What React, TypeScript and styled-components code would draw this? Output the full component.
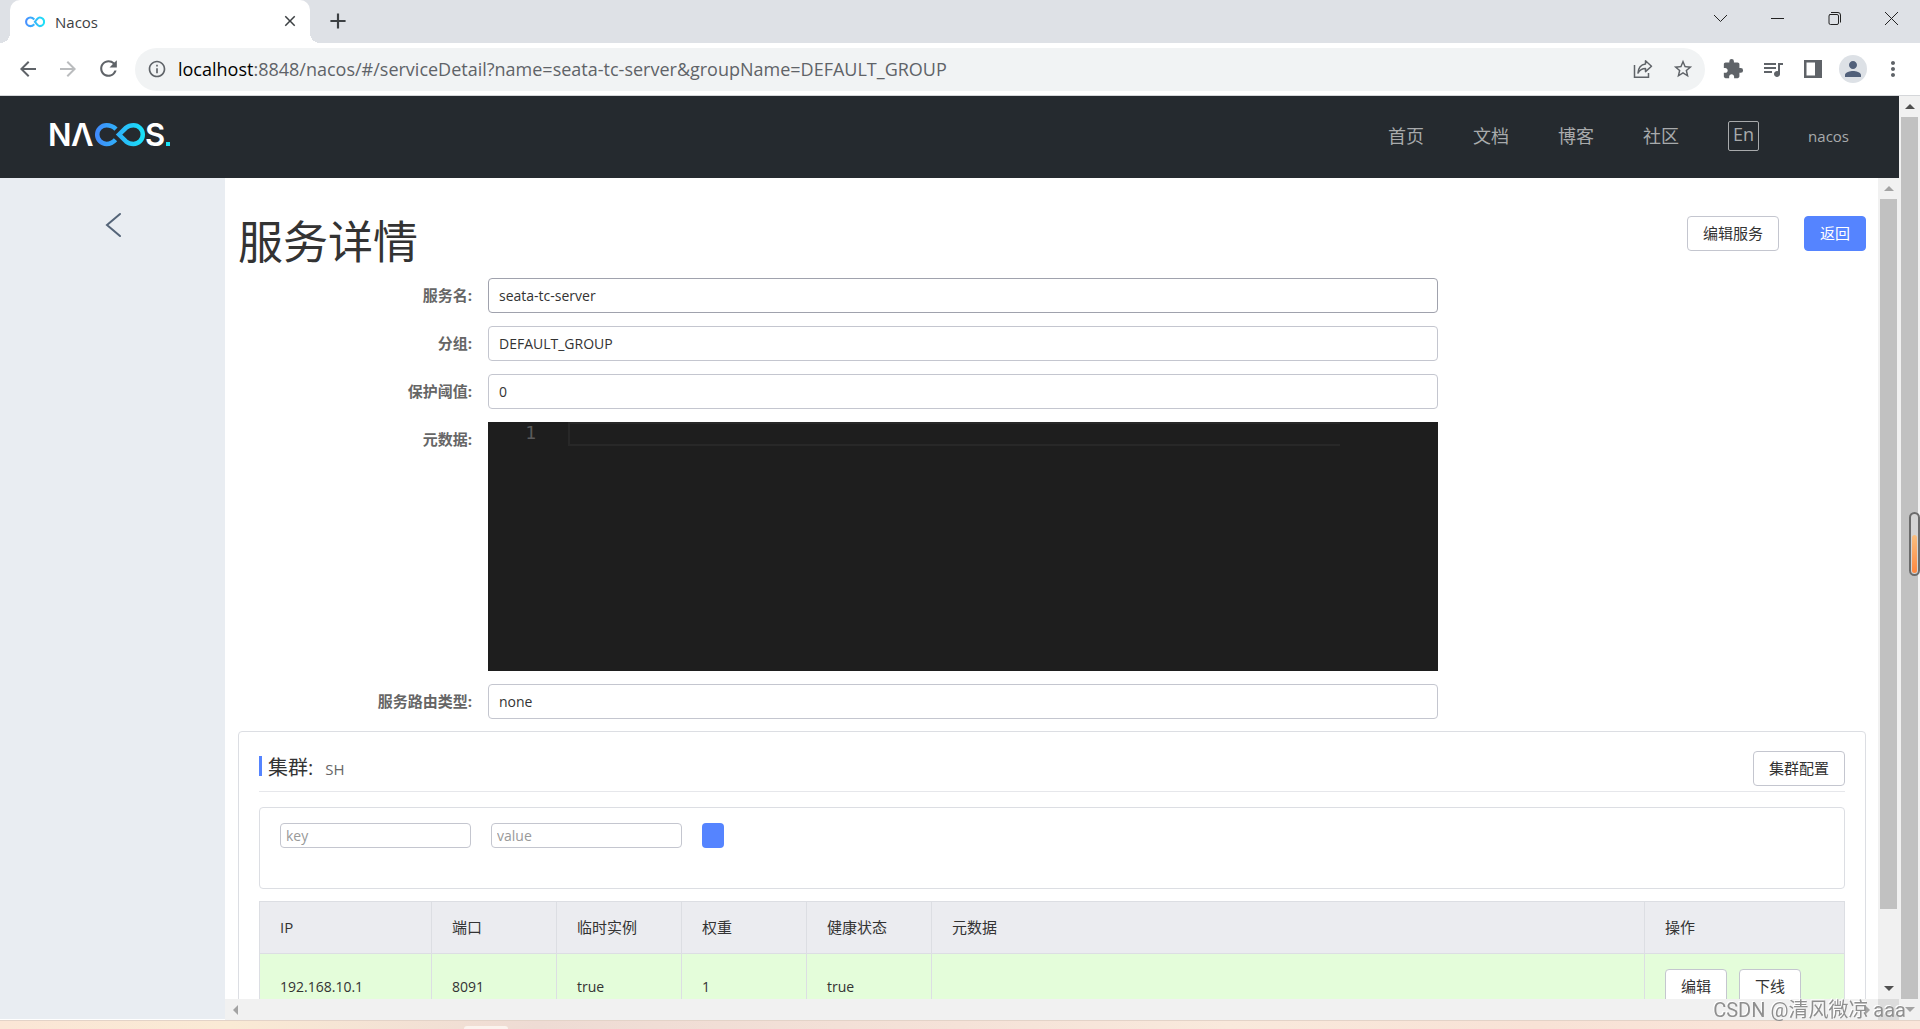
import React from "react";
import styled, { createGlobalStyle, css } from "styled-components";
import {
  MdAdd,
  MdArrowBack,
  MdArrowForward,
  MdClose,
  MdExtension,
  MdInfoOutline,
  MdMoreVert,
  MdPerson,
  MdQueueMusic,
  MdRefresh,
  MdStarBorder,
} from "react-icons/md";

const GlobalStyle = createGlobalStyle`
  *, *::before, *::after { box-sizing: border-box; }
  body {
    margin: 0;
    overflow: hidden;
    color: #333;
    font-family: "Open Sans", "Noto Sans CJK SC", sans-serif;
    font-size: 15px;
    line-height: 20px;
  }
  button, input, textarea { font-family: inherit; margin: 0; }
`;

/* ---------- Browser window ---------- */

const BrowserWindow = styled.div`
  display: flex;
  flex-direction: column;
  height: 100vh;
  background: #fff;
`;

const TitleBar = styled.div`
  display: flex;
  flex: none;
  height: 43px;
  padding-left: 10px;
  background: #dee1e6;
`;

const Tab = styled.div`
  position: relative;
  display: flex;
  align-items: center;
  gap: 10px;
  width: 300px;
  padding: 0 11px 0 15px;
  border-radius: 10px 10px 0 0;
  background: #fff;

  &::before,
  &::after {
    content: "";
    position: absolute;
    bottom: 0;
    width: 10px;
    height: 10px;
  }
  &::before {
    right: 100%;
    background: radial-gradient(circle at 0 0, transparent 10px, #fff 10px);
  }
  &::after {
    left: 100%;
    background: radial-gradient(circle at 100% 0, transparent 10px, #fff 10px);
  }
`;

const TabTitle = styled.span`
  flex: 1;
  color: #3c4043;
`;

const IconButton = styled.button<{ $width: number; $color?: string }>`
  display: flex;
  align-items: center;
  justify-content: center;
  flex: none;
  width: ${(p) => p.$width}px;
  padding: 0 0 2px;
  border: 0;
  background: none;
  color: ${(p) => p.$color ?? "#5f6368"};
`;

const WindowControls = styled.div`
  display: flex;
  height: 38px;
  margin-left: auto;
`;

const Toolbar = styled.div`
  display: flex;
  flex: none;
  align-items: stretch;
  height: 53px;
  padding: 5px 7px 4px 8px;
  border-bottom: 1px solid #d5d7da;
`;

const Omnibox = styled.div`
  display: flex;
  flex: 1;
  align-items: stretch;
  margin: 0 8px 0 7px;
  padding: 0 2px 0 12px;
  border-radius: 22px;
  background: #f1f3f4;
`;

const SiteInfo = styled(IconButton)`
  margin-right: 11px;
`;

const Address = styled.div`
  flex: 1;
  align-self: center;
  padding-bottom: 2px;
  color: #5f6368;
  font-size: 18px;
  line-height: 24px;
`;

const Host = styled.span`
  color: #000;
`;

const Avatar = styled.span`
  display: flex;
  align-items: center;
  justify-content: center;
  width: 28px;
  height: 28px;
  border-radius: 50%;
  background: #dde1e6;
  color: #51607a;
`;

const Viewport = styled.div`
  display: flex;
  flex: 1;
  min-height: 0;
`;

const Page = styled.div`
  display: flex;
  flex: 1;
  flex-direction: column;
  min-width: 0;
`;

const DesktopEdge = styled.div`
  display: flex;
  flex: none;
  align-items: flex-end;
  height: 9px;
  padding-left: 464px;
  border-top: 1px solid #e3d3c8;
  background: linear-gradient(90deg, #fbe6d6, #faead5 12%, #eedbd4 28%, #f5e2d8 50%, #f9e9dc 64%, #f8e2d6 80%, #fae6da);

  &::after {
    content: "";
    width: 44px;
    height: 3px;
    border-radius: 4px 4px 0 0;
    background: #fbf3ee;
  }
`;

/* ---------- Scroll bars ---------- */

const VerticalTrack = styled.div`
  display: flex;
  flex: none;
  flex-direction: column;
  align-items: center;
  width: 21px;
  background: #f1f1f1;
`;

const Arrow = styled.span<{ $dir: "up" | "down" | "left" | "right"; $color: string }>`
  display: flex;
  align-items: center;
  justify-content: center;
  flex: none;
  width: 21px;
  height: 21px;

  &::before {
    content: "";
    border: 5px solid transparent;
    ${(p) => p.$dir === "up" && css`border-top-width: 0; border-bottom-color: ${p.$color};`}
    ${(p) => p.$dir === "down" && css`border-bottom-width: 0; border-top-color: ${p.$color};`}
    ${(p) => p.$dir === "left" && css`border-left-width: 0; border-right-color: ${p.$color};`}
    ${(p) => p.$dir === "right" && css`border-right-width: 0; border-left-color: ${p.$color};`}
  }
`;

const Thumb = styled.div<{ $share: number }>`
  flex: ${(p) => p.$share} 1 0;
  width: 17px;
  background: #c1c1c1;
`;

const TrackRest = styled.div<{ $share: number }>`
  flex: ${(p) => p.$share} 1 0;
`;

const HorizontalTrack = styled.div`
  display: flex;
  flex: none;
  justify-content: space-between;
  height: 21px;
  background: #f1f1f1;
`;

const TrackEnd = styled.div`
  display: flex;
`;

const Corner = styled.span`
  width: 21px;
  background: #dcdcdc;
`;

/* ---------- Nacos header and side ---------- */

const Header = styled.header`
  display: flex;
  flex: none;
  align-items: center;
  justify-content: space-between;
  height: 82px;
  padding: 0 50px 2px 47px;
  background: #252a2f;
`;

const LogoLink = styled.a`
  display: flex;
  margin-bottom: 2px;
`;

const LogoLetter = styled.text`
  fill: #fff;
  font-family: Inter, sans-serif;
  font-size: 31px;
  font-weight: 600;
`;

const Nav = styled.nav`
  display: flex;
  align-items: center;
  gap: 49px;
`;

const NavLink = styled.a<{ $small?: boolean }>`
  color: #a8aaac;
  font-size: ${(p) => (p.$small ? 15 : 18)}px;
  line-height: 24px;
  text-decoration: none;
`;

const LangButton = styled.button`
  width: 31px;
  height: 30px;
  padding: 0 0 4px;
  border: 1px solid #a8aaac;
  border-radius: 2px;
  background: none;
  color: #a8aaac;
  font-size: 18px;
  line-height: 24px;
`;

const Body = styled.div`
  display: flex;
  flex: 1;
  min-height: 0;
`;

const Sidebar = styled.aside`
  display: flex;
  flex: none;
  align-items: flex-start;
  justify-content: center;
  width: 225px;
  padding-top: 34px;
  border-bottom: 1px solid #fff;
  background: #e9edf2;
`;

const Main = styled.div`
  display: flex;
  flex: 1;
  flex-direction: column;
  min-width: 0;
`;

const ScrollArea = styled.div`
  display: flex;
  flex: 1;
  min-height: 0;
`;

const Content = styled.main`
  flex: 1;
  min-width: 0;
  overflow: hidden;
  padding: 38px 12px 0 13px;
`;

const TitleRow = styled.div`
  display: flex;
  align-items: flex-start;
  justify-content: space-between;
  margin-bottom: 10px;
`;

const Title = styled.h1`
  margin: 0;
  font-size: 45px;
  font-weight: 400;
  line-height: 52px;
`;

const ButtonGroup = styled.div<{ $gap: number }>`
  display: flex;
  gap: ${(p) => p.$gap}px;
`;

const Button = styled.button<{ $primary?: boolean }>`
  height: 35px;
  padding: 0 15px 2px;
  border: 1px solid ${(p) => (p.$primary ? "#5584ff" : "#c4c6cf")};
  border-radius: 4px;
  background: ${(p) => (p.$primary ? "#5584ff" : "#fff")};
  color: ${(p) => (p.$primary ? "#fff" : "#333")};
  font-size: 15px;
  line-height: 20px;
  white-space: nowrap;
`;

/* ---------- Service form ---------- */

const Form = styled.form`
  display: grid;
  grid-template-columns: 250px minmax(0, 950px);
  row-gap: 13px;
  margin-bottom: 12px;
`;

const Label = styled.label`
  padding-right: 16px;
  color: #666;
  font-weight: 700;
  line-height: 34px;
  text-align: right;
`;

const Input = styled.input<{ $active?: boolean }>`
  width: 100%;
  height: 35px;
  padding: 0 10px 1px;
  border: 1px solid ${(p) => (p.$active ? "#a0a2ad" : "#c4c6cf")};
  border-radius: 4px;
  outline: 0;
  background: #fff;
  color: #333;
  font-size: 14px;
`;

const Editor = styled.div`
  display: flex;
  align-items: flex-start;
  height: 249px;
  padding-right: 98px;
  background: #1e1e1e;
`;

const LineNumber = styled.span`
  width: 80px;
  padding-right: 32px;
  color: #5a5a5a;
  font-family: "DejaVu Sans Mono", monospace;
  font-size: 18px;
  line-height: 22px;
  text-align: right;
`;

const EditorLine = styled.textarea`
  flex: 1;
  height: 24px;
  padding: 0;
  border: 2px solid #282828;
  border-right: 0;
  outline: 0;
  resize: none;
  overflow: hidden;
  background: none;
  color: #d4d4d4;
`;

/* ---------- Cluster card ---------- */

const Card = styled.section`
  padding: 19px 20px 20px;
  border: 1px solid #dcdee3;
  border-radius: 4px;
`;

const CardHeader = styled.div`
  display: flex;
  align-items: flex-start;
  justify-content: space-between;
  margin-bottom: 15px;
  padding-bottom: 5px;
  border-bottom: 1px solid #e6e7eb;
`;

const CardTitle = styled.h2`
  display: flex;
  align-items: baseline;
  gap: 12px;
  height: 20px;
  margin: 5px 0 0;
  padding-left: 6px;
  border-left: 3px solid #5584ff;
  font-size: 20px;
  font-weight: 400;
  line-height: 24px;
`;

const ClusterName = styled.span`
  color: #666;
  font-size: 15px;
`;

const FilterBox = styled.div`
  display: flex;
  align-items: flex-start;
  gap: 20px;
  min-height: 82px;
  margin-bottom: 12px;
  padding: 15px 20px;
  border: 1px solid #dcdee3;
  border-radius: 4px;
`;

const FilterInput = styled.input`
  width: 191px;
  height: 25px;
  padding: 0 5px;
  border: 1px solid #c4c6cf;
  border-radius: 4px;
  outline: 0;
  color: #333;
  font-size: 14px;

  &::placeholder {
    color: #999;
  }
`;

const FilterSubmit = styled.button`
  width: 22px;
  height: 25px;
  padding: 0;
  border: 0;
  border-radius: 4px;
  background: #5584ff;
`;

const Table = styled.table`
  width: 100%;
  table-layout: fixed;
  border: solid #dcdee3;
  border-width: 1px 0 0 1px;
  border-collapse: separate;
  border-spacing: 0;
`;

const Th = styled.th<{ $width?: number }>`
  width: ${(p) => (p.$width ? `${p.$width}px` : "auto")};
  height: 52px;
  padding: 0 20px 2px;
  border: solid #dcdee3;
  border-width: 0 1px 1px 0;
  background: #ebecf0;
  font-weight: 400;
  text-align: left;
`;

const Td = styled.td`
  padding: 15px 20px 17px;
  border: solid #dcdee3;
  border-width: 0 1px 1px 0;
  background: #e4fdda;
  font-size: 14px;
`;

/* ---------- Overlays ---------- */

const Watermark = styled.div`
  position: fixed;
  right: 14px;
  bottom: 6px;
  color: #8f8f8f;
  font-family: "Roboto", "Noto Sans CJK SC", sans-serif;
  font-size: 20px;
  line-height: 26px;
  text-shadow: -1px -1px 0 #fff;
  white-space: nowrap;
`;

const Gauge = styled.div`
  position: fixed;
  top: 512px;
  right: 0;
  width: 11px;
  height: 64px;
  padding: 21px 1px 1px;
  border: 2px solid #6b6b6b;
  border-radius: 6px;
  background: #d4d4d4;
`;

const GaugeFill = styled.div`
  height: 100%;
  border-radius: 3px;
  background: linear-gradient(#f9bf80, #ff8740);
`;

/* ---------- Drawings ---------- */

const Favicon = () => (
  <svg width="20" height="12" viewBox="0 0 20 12" fill="none" strokeWidth="2.100" aria-hidden="true">
    <defs>
      <linearGradient id="fav" gradientUnits="userSpaceOnUse" x1="0" y1="0" x2="20" y2="0">
        <stop offset="0" stopColor="#4a8cff" />
        <stop offset="1" stopColor="#1de4f6" />
      </linearGradient>
    </defs>
    <path d="M9.300 3.500C8 2 6.800 1.500 5.400 1.500A4.300 4.300 0 0 0 5.400 10.100C7 10.100 8 9.600 9.300 8.200" stroke="url(#fav)" />
    <path d="M9.900 5.800L12 3.200C13 2.100 13.700 1.500 14.800 1.500A4.300 4.300 0 0 1 14.800 10.100C13.700 10.100 13 9.600 12 8.400Z" stroke="url(#fav)" />
  </svg>
);

const Logo = () => (
  <svg width="126" height="40" viewBox="-2 -8 126 40" role="img" aria-label="NACOS.">
    <defs>
      <linearGradient id="brand" gradientUnits="userSpaceOnUse" x1="46" y1="0" x2="96" y2="0">
        <stop offset="0" stopColor="#4288fb" />
        <stop offset="1" stopColor="#17e3f8" />
      </linearGradient>
    </defs>
    <LogoLetter x="-1" y="23">N</LogoLetter>
    <LogoLetter x="22" y="23">Λ</LogoLetter>
    <g fill="none" stroke="url(#brand)" strokeWidth="4.500">
      <path d="M67 6.200C64 3.200 61 2.300 57.500 2.300A9.300 9.300 0 0 0 57.500 20.900C61.500 20.900 64 19.500 66.500 16.700" />
      <path d="M70 11.600L77 4.800C79.300 2.900 81.500 2.300 84.500 2.300A9.300 9.300 0 0 1 84.500 20.900C81.500 20.900 79.300 20.300 77 18.400Z" />
    </g>
    <LogoLetter x="96" y="23">S</LogoLetter>
    <rect x="117" y="19" width="4" height="4" fill="#17e3f8" />
  </svg>
);

const ShareIcon = () => (
  <svg width="20" height="20" viewBox="0 0 20 20" fill="none" stroke="currentColor" strokeWidth="1.500" aria-hidden="true">
    <path d="M1.500 6V18.200H15.500V14" />
    <path d="M12.500 1.800L18.500 7.200L12.500 12.600V9.600C9.200 9.600 6.800 11 5 14C5.300 9 8 5.500 12.500 4.900Z" strokeLinejoin="round" />
  </svg>
);

const SidePanelIcon = () => (
  <svg width="20" height="20" viewBox="0 0 20 20" fill="currentColor" aria-hidden="true">
    <path fillRule="evenodd" d="M1 1H19V19H1ZM3.500 3.500V16.500H12V3.500Z" />
  </svg>
);

type WindowGlyph = "search" | "min" | "max" | "close";

const windowPaths: Record<WindowGlyph, string> = {
  search: "M1 4L7.500 10.500L14 4",
  min: "M1 7.500H14",
  max: "M2.500 3.500H10Q11.500 3.500 11.500 5V12Q11.500 13.500 10 13.500H3.500Q2 13.500 2 12V5Q2 3.500 3.500 3.500M4 1.500H11Q13.500 1.500 13.500 4V11.500",
  close: "M1 1L14 14M14 1L1 14",
};

const WindowIcon = ({ name }: { name: WindowGlyph }) => (
  <svg width="15" height="15" viewBox="0 0 15 15" fill="none" stroke="currentColor" strokeWidth="1" aria-hidden="true">
    <path d={windowPaths[name]} />
  </svg>
);

const CollapseIcon = () => (
  <svg width="18" height="26" viewBox="0 0 18 26" fill="none" stroke="#546478" strokeWidth="2" aria-hidden="true">
    <path d="M16 2L3 13L16 24" strokeLinecap="round" />
  </svg>
);

/* ---------- Data ---------- */

const links = ["首页", "文档", "博客", "社区"];

const columns: { title: string; width?: number }[] = [
  { title: "IP", width: 172 },
  { title: "端口", width: 125 },
  { title: "临时实例", width: 125 },
  { title: "权重", width: 125 },
  { title: "健康状态", width: 125 },
  { title: "元数据" },
  { title: "操作", width: 200 },
];

const instances = [{ ip: "192.168.10.1", port: 8091, ephemeral: true, weight: 1, healthy: true }];

const Field = ({ id, label, value, active }: { id: string; label: string; value: string; active?: boolean }) => (
  <>
    <Label htmlFor={id}>{label}:</Label>
    <Input id={id} defaultValue={value} readOnly $active={active} />
  </>
);

export default function App() {
  return (
    <BrowserWindow>
      <GlobalStyle />
      <TitleBar>
        <Tab>
          <Favicon />
          <TabTitle>Nacos</TabTitle>
          <IconButton $width={18} $color="#3c4043" aria-label="关闭标签页">
            <MdClose size={18} />
          </IconButton>
        </Tab>
        <IconButton $width={55} $color="#3c4043" aria-label="新标签页">
          <MdAdd size={26} />
        </IconButton>
        <WindowControls>
          {(["search", "min", "max", "close"] as WindowGlyph[]).map((name) => (
            <IconButton key={name} $width={57} $color="#222" aria-label={name}>
              <WindowIcon name={name} />
            </IconButton>
          ))}
        </WindowControls>
      </TitleBar>

      <Toolbar>
        <IconButton $width={40} aria-label="后退"><MdArrowBack size={24} /></IconButton>
        <IconButton $width={40} $color="#babcbe" aria-label="前进"><MdArrowForward size={24} /></IconButton>
        <IconButton $width={40} aria-label="刷新"><MdRefresh size={25} /></IconButton>
        <Omnibox>
          <SiteInfo $width={20} aria-label="网站信息"><MdInfoOutline size={20} /></SiteInfo>
          <Address>
            <Host>localhost</Host>:8848/nacos/#/serviceDetail?name=seata-tc-server&amp;groupName=DEFAULT_GROUP
          </Address>
          <IconButton $width={40} aria-label="分享"><ShareIcon /></IconButton>
          <IconButton $width={40} aria-label="收藏"><MdStarBorder size={22} /></IconButton>
        </Omnibox>
        <IconButton $width={40} aria-label="扩展程序"><MdExtension size={22} /></IconButton>
        <IconButton $width={40} aria-label="媒体"><MdQueueMusic size={24} /></IconButton>
        <IconButton $width={40} aria-label="侧边栏"><SidePanelIcon /></IconButton>
        <IconButton $width={40} aria-label="用户"><Avatar><MdPerson size={24} /></Avatar></IconButton>
        <IconButton $width={40} aria-label="菜单"><MdMoreVert size={24} /></IconButton>
      </Toolbar>

      <Viewport>
        <Page>
          <Header>
            <LogoLink href="#/"><Logo /></LogoLink>
            <Nav>
              {links.map((text) => (
                <NavLink key={text} href="#/">{text}</NavLink>
              ))}
              <LangButton>En</LangButton>
              <NavLink href="#/" $small>nacos</NavLink>
            </Nav>
          </Header>

          <Body>
            <Sidebar>
              <IconButton $width={30} aria-label="返回上一级"><CollapseIcon /></IconButton>
            </Sidebar>
            <Main>
              <ScrollArea>
                <Content>
                  <TitleRow>
                    <Title>服务详情</Title>
                    <ButtonGroup $gap={25}>
                      <Button>编辑服务</Button>
                      <Button $primary>返回</Button>
                    </ButtonGroup>
                  </TitleRow>

                  <Form>
                    <Field id="name" label="服务名" value="seata-tc-server" active />
                    <Field id="group" label="分组" value="DEFAULT_GROUP" />
                    <Field id="threshold" label="保护阈值" value="0" />
                    <Label htmlFor="metadata">元数据:</Label>
                    <Editor>
                      <LineNumber>1</LineNumber>
                      <EditorLine id="metadata" readOnly />
                    </Editor>
                    <Field id="selector" label="服务路由类型" value="none" />
                  </Form>

                  <Card>
                    <CardHeader>
                      <CardTitle>
                        集群: <ClusterName>SH</ClusterName>
                      </CardTitle>
                      <Button>集群配置</Button>
                    </CardHeader>
                    <FilterBox>
                      <FilterInput placeholder="key" aria-label="key" />
                      <FilterInput placeholder="value" aria-label="value" />
                      <FilterSubmit aria-label="添加" />
                    </FilterBox>
                    <Table>
                      <thead>
                        <tr>
                          {columns.map((c) => (
                            <Th key={c.title} $width={c.width}>{c.title}</Th>
                          ))}
                        </tr>
                      </thead>
                      <tbody>
                        {instances.map((row) => (
                          <tr key={row.ip}>
                            <Td>{row.ip}</Td>
                            <Td>{row.port}</Td>
                            <Td>{String(row.ephemeral)}</Td>
                            <Td>{row.weight}</Td>
                            <Td>{String(row.healthy)}</Td>
                            <Td />
                            <Td>
                              <ButtonGroup $gap={12}>
                                <Button>编辑</Button>
                                <Button>下线</Button>
                              </ButtonGroup>
                            </Td>
                          </tr>
                        ))}
                      </tbody>
                    </Table>
                  </Card>
                </Content>
                <VerticalTrack>
                  <Arrow $dir="up" $color="#a3a3a3" />
                  <Thumb $share={709} />
                  <TrackRest $share={69} />
                  <Arrow $dir="down" $color="#505050" />
                </VerticalTrack>
              </ScrollArea>
              <HorizontalTrack>
                <Arrow $dir="left" $color="#a3a3a3" />
                <TrackEnd>
                  <Arrow $dir="right" $color="#a3a3a3" />
                  <Corner />
                </TrackEnd>
              </HorizontalTrack>
            </Main>
          </Body>
        </Page>
        <VerticalTrack>
          <Arrow $dir="up" $color="#505050" />
          <Thumb $share={1} />
          <Arrow $dir="down" $color="#a3a3a3" />
        </VerticalTrack>
      </Viewport>
      <DesktopEdge />

      <Gauge><GaugeFill /></Gauge>
      <Watermark>CSDN @清风微凉 aaa</Watermark>
    </BrowserWindow>
  );
}
